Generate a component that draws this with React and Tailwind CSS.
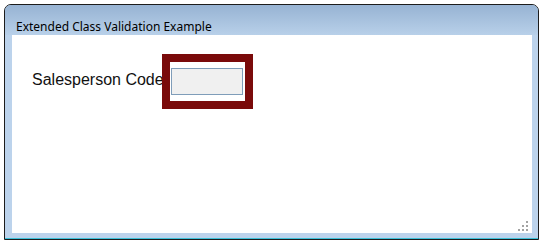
import React from 'react';

const SizeGrip = () => (
  <svg className="absolute right-[2px] bottom-0" width="12" height="12" viewBox="0 0 12 12" fill="#a3a3a3">
    <rect x="8" y="0" width="2" height="2" />
    <rect x="4" y="4" width="2" height="2" />
    <rect x="8" y="4" width="2" height="2" />
    <rect x="0" y="8" width="2" height="2" />
    <rect x="4" y="8" width="2" height="2" />
    <rect x="8" y="8" width="2" height="2" />
  </svg>
);

const App = () => {
  return (
    <div className="w-[546px] h-[246px] bg-white pl-[4px] pt-[4px]">
      <div className="w-[535px] h-[236px] border border-[#1c1c1c] rounded-t-[7px] bg-[#bcd3ec] flex flex-col overflow-hidden shadow-[inset_0_-1px_0_#3cc0d8]">
        <div className="h-[30px] shrink-0 bg-gradient-to-b from-[#97b3d3] to-[#b8d0e9] pl-[11px] pt-[8px]">
          <span className="text-[12px] leading-[14px] text-black" style={{ fontFamily: '"Noto Sans", "Open Sans", sans-serif' }}>
            Extended Class Validation Example
          </span>
        </div>
        <div className="flex-1 ml-[7px] mr-[6px] mb-[6px] bg-white relative">
          <div className="flex items-start pl-[20px] pt-[19px]">
            <span
              className="w-[130px] mt-[17px] whitespace-nowrap text-[16px] leading-[18px] text-[#111]"
              style={{ fontFamily: '"Liberation Sans", Arial, sans-serif' }}
            >
              Salesperson Code
            </span>
            <div className="w-[91px] h-[55px] border-[8px] border-[#7a0a0a] bg-white pt-[6px] pl-[1px]">
              <div className="w-[72px] h-[27px] border border-[#7f9db9] bg-[#f0f0f0]" />
            </div>
          </div>
          <SizeGrip />
        </div>
      </div>
    </div>
  );
};

export default App;
